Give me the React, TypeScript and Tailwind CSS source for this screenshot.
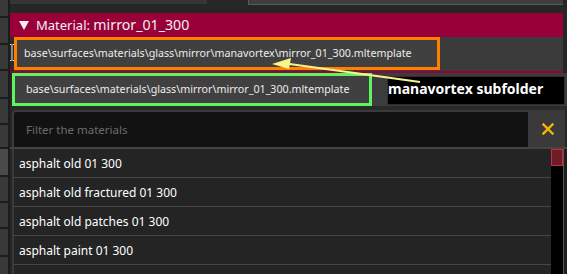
import React from "react"

const font = { fontFamily: '"Noto Sans", "Liberation Sans", sans-serif' }

const materials = [
  "asphalt old 01 300",
  "asphalt old fractured 01 300",
  "asphalt old patches 01 300",
  "asphalt paint 01 300",
]

// tool strip cells down the left edge
const stripCells = [16, 25, 24, 26, 24, 22, 26, 24, 24, 26, 20]

function LeftStrip() {
  return (
    <div className="flex w-[10px] shrink-0 flex-col gap-[2px] bg-[#1c1c1c] pr-[2px]">
      {stripCells.map((h, i) => (
        <div
          key={i}
          className={i === 6 ? "w-full shrink-0 bg-[#4a4a4a]" : "w-full shrink-0 bg-[#393939]"}
          style={{ height: h }}
        />
      ))}
    </div>
  )
}

export default function App() {
  return (
    <div className="relative flex h-[274px] w-[567px] overflow-hidden bg-[#262626] text-[#e6e6e6]" style={font}>
      <LeftStrip />

      <div className="flex min-w-0 flex-1 flex-col">
        {/* top toolbar remains */}
        <div className="flex h-[13px] shrink-0 items-start gap-[41px] bg-[#262626] pr-[4px]">
          <div className="h-[4px] w-[197px] bg-[#363636]" />
          <div className="h-[5px] flex-1 border-b border-l border-[#5a5a5a] bg-[#3e3e3e]" />
        </div>

        {/* material panel */}
        <div className="mr-[4px] flex shrink-0 flex-col bg-[#99003a] pb-[2px]">
          <div className="flex h-[24px] items-center gap-[7px] pl-[9px]">
            <svg width="10" height="9" viewBox="0 0 10 9">
              <polygon points="0,0 10,0 5,9" fill="#f0f0f0" />
            </svg>
            <span className="text-[13px] leading-none text-[#f0f0f0]">
              Material: <span className="text-[14.2px]">mirror_01_300</span>
            </span>
          </div>
          <div className="flex h-[34px] bg-[#3b3b3b]">
            <div className="w-[4px] bg-[#2a2a2a]" />
            <div className="flex h-[33px] w-[426px] items-center border-[3px] border-[#ff7f00] bg-[#404040] pl-[7px] text-[10.7px] text-[#ececec]">
              base\surfaces\materials\glass\mirror\manavortex\mirror_01_300.mltemplate
            </div>
          </div>
        </div>

        {/* corrected path row */}
        <div className="flex h-[33px] shrink-0 pl-[2px]">
          <div className="flex w-[360px] items-center border-[3px] border-[#5cf55c] bg-[#404040] pl-[11px] text-[10.7px] text-[#ececec]">
            base\surfaces\materials\glass\mirror\mirror_01_300.mltemplate
          </div>
          <div className="flex flex-1 bg-[#3c3c3c] pl-[15px] pt-[3px] pb-[1px] pr-[2px]">
            <div className="flex flex-1 items-start border border-[#2e2e2e] bg-black text-[14px] font-bold leading-[23px] text-white">
              manavortex subfolder
            </div>
          </div>
        </div>

        <div className="h-[4px] shrink-0 bg-[#2a2a2a]" />

        {/* filter */}
        <div className="flex h-[37px] shrink-0 pl-[2px] pr-[2px]">
          <div className="flex flex-1 items-center rounded-tl-[4px] border-t-[2px] border-l-[2px] border-r-[2px] border-[#3a3a3a] bg-[#121212] pl-[12px] text-[11.5px] text-[#6c6c6c]">
            Filter the materials
          </div>
          <div className="flex w-[35px] items-center justify-center bg-[#3a3a3a]">
            <svg width="12" height="12" viewBox="0 0 12 12">
              <path d="M1.5 1.5 L10.5 10.5 M10.5 1.5 L1.5 10.5" stroke="#f2b705" strokeWidth="2.4" strokeLinecap="square" />
            </svg>
          </div>
        </div>

        {/* list */}
        <div className="flex min-h-0 flex-1 border-t-[2px] border-[#444] pl-[2px]">
          <div className="flex flex-1 flex-col border-l-[2px] border-[#3a3a3a] bg-[#242424]">
            {materials.map((m) => (
              <div key={m} className="flex h-[29px] shrink-0 items-center border-b border-[#464646] pl-[5px] pt-[2px] text-[12px] text-white">
                {m}
              </div>
            ))}
          </div>
          <div className="w-[12px] shrink-0 bg-black">
            <div className="h-[17px] w-full border border-[#d0283c] bg-[#6e1c28]" />
          </div>
          <div className="w-[4px] shrink-0 border-l border-[#575757] bg-[#1e1e1e]" />
        </div>
      </div>

      {/* text cursor + annotation arrow */}
      <svg className="pointer-events-none absolute left-0 top-0" width="567" height="274">
        <path d="M10 44.5 H11.5 M12.5 44.5 H14 M12 45 V60 M10 60.5 H11.5 M12.5 60.5 H14" stroke="#e8e8e8" strokeWidth="1" />
        <line x1="420" y1="82" x2="286" y2="63.5" stroke="#f7f48c" strokeWidth="2.2" />
        <polygon points="272,64 291,58 289,69" fill="#f7f48c" />
      </svg>
    </div>
  )
}
